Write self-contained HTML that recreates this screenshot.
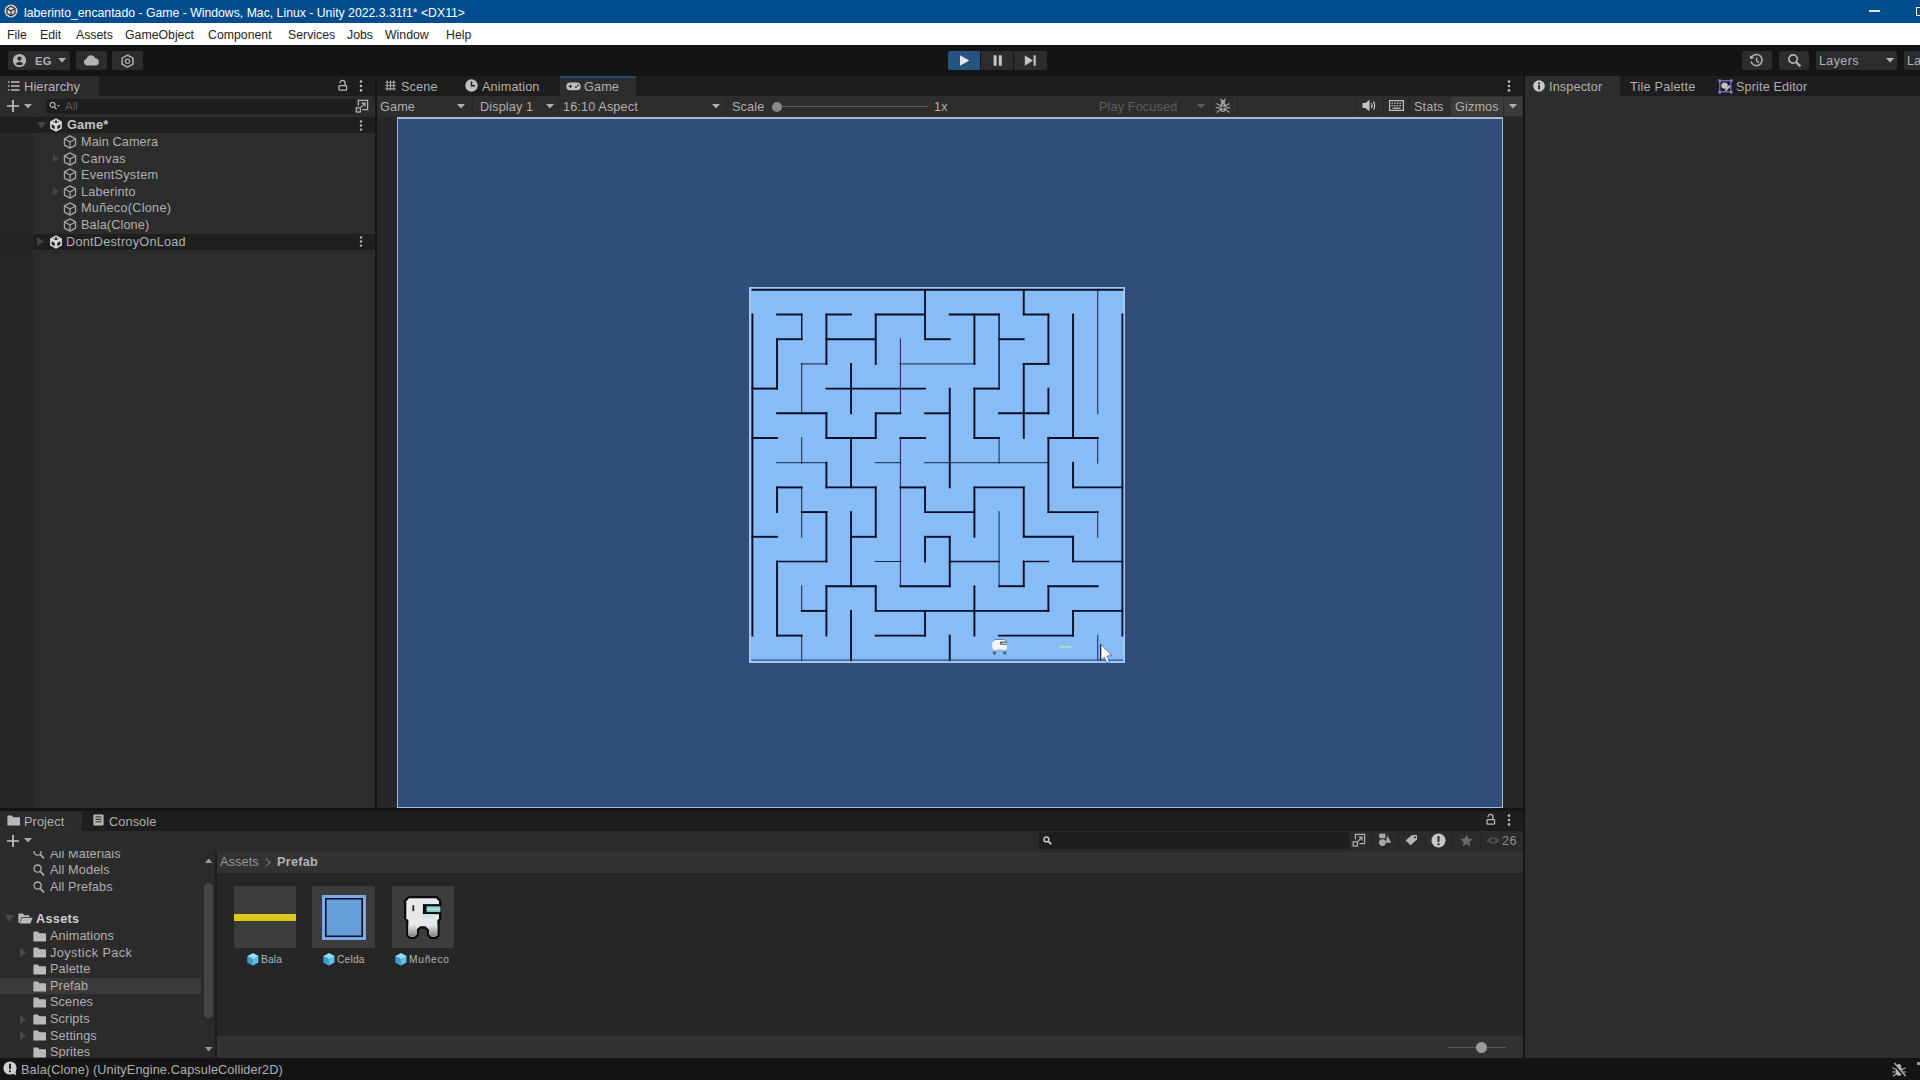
<!DOCTYPE html>
<html><head><meta charset="utf-8"><title>Unity</title>
<style>
*{box-sizing:border-box;margin:0;padding:0}
html,body{width:1920px;height:1080px;overflow:hidden;background:#141414;font-family:"Liberation Sans",sans-serif;font-size:12px;color:#c4c4c4}
.a{position:absolute}
.t{position:absolute;white-space:nowrap;line-height:14px;height:14px}
svg{position:absolute;overflow:visible}
#title{left:0;top:0;width:1920px;height:23.4px;background:#034c8e}
#title .t{color:#fff;font-size:12.25px;top:5.5px;left:24px}
#menu{left:0;top:23px;width:1920px;height:22px;background:#fff}
#menu .t{color:#262626;font-size:12.3px;top:4.5px}
#tb{left:0;top:45px;width:1920px;height:31px;background:#141414}
.btn{position:absolute;background:#2c2c2c;border-radius:2px}
.pan{position:absolute;background:#2b2b2b}
.tabbar{position:absolute;background:#1d1d1d;height:20px}
.tab{position:absolute;height:20px;background:#2b2b2b;top:0}
.dim{color:#7a7a7a}
.hi,.gt,#hiert,.u{letter-spacing:0.12px;font-size:12.7px}
.hi{color:#b0b0b0;margin-top:0.3px}
.gt{color:#b0b0b0;margin-top:0.3px}
</style></head><body>

<!-- ===== title bar ===== -->
<div id="title" class="a">
  <svg style="left:4px;top:4px" width="14" height="14" viewBox="0 0 14 14"><circle cx="7" cy="7" r="6.5" fill="#d9d9d9"/><path d="M7 2.2 L11 4.6 L11 9.4 L7 11.8 L3 9.4 L3 4.6 Z" fill="none" stroke="#222" stroke-width="1.1"/><path d="M7 7 L7 11.8 M7 7 L3 4.6 M7 7 L11 4.6" stroke="#222" stroke-width="1.1"/></svg>
  <div class="t" id="ttl">laberinto_encantado - Game - Windows, Mac, Linux - Unity 2022.3.31f1* &lt;DX11&gt;</div>
  <div class="a" style="left:1869px;top:10.2px;width:11px;height:1.7px;background:#d8e8fa"></div>
  <div class="a" style="left:1916px;top:7px;width:4px;height:9px;border:1px solid #fff;border-right:none"></div>
</div>

<!-- ===== menu bar ===== -->
<div id="menu" class="a">
  <div class="t" style="left:7px">File</div>
  <div class="t" style="left:40px">Edit</div>
  <div class="t" style="left:76px">Assets</div>
  <div class="t" style="left:125px">GameObject</div>
  <div class="t" style="left:208px">Component</div>
  <div class="t" style="left:288px">Services</div>
  <div class="t" style="left:347px">Jobs</div>
  <div class="t" style="left:385px">Window</div>
  <div class="t" style="left:446px">Help</div>
</div>

<!-- ===== main toolbar ===== -->
<div id="tb" class="a">
  <div class="btn" style="left:8px;top:6px;width:62px;height:19px"></div>
  <div class="btn" style="left:76px;top:6px;width:31px;height:19px"></div>
  <div class="btn" style="left:112px;top:6px;width:31px;height:19px"></div>
  <!-- account -->
  <svg style="left:12px;top:8px" width="15" height="15" viewBox="0 0 15 15"><circle cx="7.5" cy="7.5" r="6.6" fill="#b4b4b4"/><circle cx="7.5" cy="5.6" r="2.1" fill="#2c2c2c"/><path d="M3.6 11 Q7.5 6.6 11.4 11 Q7.5 13.6 3.6 11Z" fill="#2c2c2c"/></svg>
  <div class="t" style="left:35px;top:9px;color:#b0b0b0;font-weight:bold;font-size:11.2px;letter-spacing:0.2px">EG</div>
  <svg style="left:58.4px;top:13.4px" width="8.2" height="4.6" viewBox="0 0 9 5"><path d="M0 0H9L4.5 5Z" fill="#b4b4b4"/></svg>
  <!-- cloud -->
  <svg style="left:83px;top:9px" width="17" height="12" viewBox="0 0 17 12"><path d="M4 11.5 A3.4 3.4 0 0 1 3.6 4.8 A4.6 4.6 0 0 1 12.3 4.2 A3.7 3.7 0 0 1 13 11.5 Z" fill="#b4b4b4"/></svg>
  <!-- settings hex -->
  <svg style="left:120px;top:8px" width="15" height="16" viewBox="0 0 15 16"><path d="M7.5 2.2 L12.9 5.2 L12.9 11.2 L7.5 14.2 L2.1 11.2 L2.1 5.2 Z" fill="none" stroke="#b0b0b0" stroke-width="1.5" stroke-linejoin="round"/><circle cx="7.5" cy="8.2" r="2.1" fill="none" stroke="#b0b0b0" stroke-width="1.2"/></svg>

  <!-- play controls -->
  <div class="a" style="left:948px;top:6px;width:32px;height:19px;background:#27537f;border-radius:2px 0 0 2px"></div>
  <div class="a" style="left:981px;top:6px;width:32px;height:19px;background:#2c2c2c"></div>
  <div class="a" style="left:1014px;top:6px;width:33px;height:19px;background:#2c2c2c;border-radius:0 2px 2px 0"></div>
  <svg style="left:959px;top:10px" width="11" height="11" viewBox="0 0 11 11"><path d="M1 0.3 L10.4 5.5 L1 10.7Z" fill="#e6e6e6"/></svg>
  <svg style="left:993px;top:10px" width="10" height="11" viewBox="0 0 10 11"><rect x="0.6" y="0.3" width="3" height="10.4" fill="#c4c4c4"/><rect x="5.8" y="0.3" width="3" height="10.4" fill="#c4c4c4"/></svg>
  <svg style="left:1024px;top:10px" width="13" height="11" viewBox="0 0 13 11"><path d="M0.8 0.3 L9 5.5 L0.8 10.7Z" fill="#c4c4c4"/><rect x="9.6" y="0.3" width="2.2" height="10.4" fill="#c4c4c4"/></svg>

  <!-- right side -->
  <div class="btn" style="left:1742px;top:6px;width:30px;height:19px"></div>
  <div class="btn" style="left:1779px;top:6px;width:30px;height:19px"></div>
  <div class="btn" style="left:1816px;top:6px;width:81px;height:19px"></div>
  <div class="btn" style="left:1904px;top:6px;width:16px;height:19px;border-radius:2px 0 0 2px"></div>
  <svg style="left:1749px;top:8px" width="15" height="15" viewBox="0 0 15 15"><path d="M2.6 4.2 A5.6 5.6 0 1 1 2 8.4" fill="none" stroke="#b4b4b4" stroke-width="1.5"/><path d="M0.6 2.2 L1.4 6.2 L5.2 5Z" fill="#b4b4b4"/><path d="M7.6 4.4 V8 L10 9.6" fill="none" stroke="#b4b4b4" stroke-width="1.4"/></svg>
  <svg style="left:1787px;top:8px" width="15" height="15" viewBox="0 0 15 15"><circle cx="6" cy="6" r="4.2" fill="none" stroke="#b4b4b4" stroke-width="1.7"/><path d="M9.2 9.2 L13.4 13.4" stroke="#b4b4b4" stroke-width="2.2"/></svg>
  <div class="t" style="left:1819px;top:8.7px;color:#b4b4b4;font-size:12.4px;letter-spacing:0.45px">Layers</div>
  <svg style="left:1885.6px;top:13.4px" width="8.2" height="4.6" viewBox="0 0 9 5"><path d="M0 0H9L4.5 5Z" fill="#b4b4b4"/></svg>
  <div class="t" style="left:1907px;top:8.7px;color:#b4b4b4;font-size:12.4px;letter-spacing:0.45px;width:13px;overflow:hidden">La</div>
</div>

<!-- ===== Hierarchy ===== -->
<div class="pan" style="left:0;top:76px;width:375px;height:732px;background:#2c2c2c"></div>
<div class="a" style="left:0;top:116px;width:33px;height:692px;background:#262626"></div>
<div class="tabbar" style="left:0;top:76px;width:375px"></div>
<div class="tab" style="left:0;top:76px;width:99px"></div>
<svg style="left:8px;top:81px" width="12" height="10" viewBox="0 0 12 10"><path d="M0 1H1.6M3 1H11.5M0 5H1.6M3 5H11.5M0 9H1.6M3 9H11.5" stroke="#bdbdbd" stroke-width="1.3"/></svg>
<div class="t" style="left:24px;top:80px;font-size:12.9px;letter-spacing:0.1px;color:#b6b6b6;margin-top:0.3px" id="hiert">Hierarchy</div>
<!-- lock + kebab -->
<svg class="lock" style="left:338px;top:80px" width="10" height="11" viewBox="0 0 10 11"><rect x="1" y="5.6" width="7.6" height="4.6" rx="0.8" fill="none" stroke="#b8b8b8" stroke-width="1.3"/><path d="M2 3.2 V2.9 A2.5 2.5 0 0 1 7 2.9 V5.4" fill="none" stroke="#b8b8b8" stroke-width="1.3"/></svg>
<svg style="left:359px;top:80px" width="4" height="12" viewBox="0 0 4 12"><circle cx="2" cy="1.6" r="1.3" fill="#b8b8b8"/><circle cx="2" cy="6" r="1.3" fill="#b8b8b8"/><circle cx="2" cy="10.4" r="1.3" fill="#b8b8b8"/></svg>
<!-- toolbar -->
<svg style="left:7px;top:100px" width="12" height="12" viewBox="0 0 12 12"><path d="M6 0V12M0 6H12" stroke="#c4c4c4" stroke-width="1.7"/></svg>
<svg style="left:24px;top:104px" width="8" height="5" viewBox="0 0 8 5"><path d="M0 0H8L4 4.6Z" fill="#a8a8a8"/></svg>
<div class="a" style="left:46px;top:99px;width:310px;height:15px;background:#1e1e1e;border-radius:2px"></div>
<svg style="left:49px;top:101px" width="12" height="10" viewBox="0 0 12 10"><circle cx="3.6" cy="3.8" r="2.5" fill="none" stroke="#b0b0b0" stroke-width="1.2"/><path d="M5.4 5.8 L7.6 8.4" stroke="#b0b0b0" stroke-width="1.3"/><path d="M8 4H11L9.5 5.8Z" fill="#b0b0b0"/></svg>
<div class="t" style="left:65px;top:99px;color:#585858;font-size:11.5px">All</div>
<svg style="left:355px;top:99px" width="14" height="14" viewBox="0 0 14 14"><path d="M3.4 6.6 V1.4 H12.6 V10.6 H7.4" fill="none" stroke="#b4b4b4" stroke-width="1.2"/><rect x="1.2" y="8.8" width="4.2" height="4.2" fill="none" stroke="#b4b4b4" stroke-width="1.2"/><path d="M5.6 8.6 L9.6 4.6 M6.6 4.2 H10 V7.6" fill="none" stroke="#b4b4b4" stroke-width="1.2"/></svg>
<!-- scene rows -->
<div class="a" style="left:0;top:117px;width:375px;height:16px;background:#1f1f1f"></div>
<div class="a" style="left:0;top:234px;width:33px;height:16px;background:#232323"></div><div class="a" style="left:33px;top:234px;width:342px;height:16px;background:#1f1f1f"></div>
<svg style="left:37px;top:122px" width="9" height="7" viewBox="0 0 9 7"><path d="M0 0H9L4.5 7Z" fill="#424242"/></svg>
<svg style="left:37px;top:237px" width="7" height="9" viewBox="0 0 7 9"><path d="M0 0V9L7 4.5Z" fill="#424242"/></svg>
<svg style="left:53px;top:154px" width="6" height="9" viewBox="0 0 6 9"><path d="M0 0V9L6 4.5Z" fill="#424242"/></svg>
<svg style="left:53px;top:187px" width="6" height="9" viewBox="0 0 6 9"><path d="M0 0V9L6 4.5Z" fill="#424242"/></svg>
<svg width="0" height="0"><defs>
 <g id="ulogo"><path d="M7 0.2 L12.9 3.6 V10.4 L7 13.8 L1.1 10.4 V3.6Z" fill="#d6d6d6"/><path d="M7 0.9 L8.5 5 H5.5Z M2.7 6.3 L5.7 8 V11.3 L2.7 9.6Z M11.3 6.3 L8.3 8 V11.3 L11.3 9.6Z" fill="#1f1f1f"/><path d="M4.2 3.3 L5.4 4.0 M9.8 3.3 L8.6 4.0" stroke="#1f1f1f" stroke-width="0.8"/></g>
 <g id="cube"><path d="M7 0.9 L12.6 3.9 V10.1 L7 13.1 L1.4 10.1 V3.9Z M1.6 4 L7 7 L12.4 4 M7 7 V13" fill="none" stroke="#a6a6a6" stroke-width="1.25" stroke-linejoin="round"/></g>
</defs></svg>
<svg style="left:49px;top:118px" width="14" height="14" viewBox="0 0 14 14"><use href="#ulogo"/></svg>
<svg style="left:49px;top:235px" width="14" height="14" viewBox="0 0 14 14"><use href="#ulogo"/></svg>
<div class="t" style="left:67px;top:118px;font-weight:bold;font-size:12.8px;color:#c4c4c4;letter-spacing:0.15px;margin-top:0.3px" id="gm">Game*</div>
<svg style="left:63px;top:135px" width="14" height="14" viewBox="0 0 14 14"><use href="#cube"/></svg>
<svg style="left:63px;top:152px" width="14" height="14" viewBox="0 0 14 14"><use href="#cube"/></svg>
<svg style="left:63px;top:168px" width="14" height="14" viewBox="0 0 14 14"><use href="#cube"/></svg>
<svg style="left:63px;top:185px" width="14" height="14" viewBox="0 0 14 14"><use href="#cube"/></svg>
<svg style="left:63px;top:202px" width="14" height="14" viewBox="0 0 14 14"><use href="#cube"/></svg>
<svg style="left:63px;top:218px" width="14" height="14" viewBox="0 0 14 14"><use href="#cube"/></svg>
<div class="t hi" style="left:81px;top:135px;letter-spacing:0.1px">Main Camera</div>
<div class="t hi" style="left:81px;top:152px;letter-spacing:0.32px">Canvas</div>
<div class="t hi" style="left:81px;top:168px;letter-spacing:0.23px">EventSystem</div>
<div class="t hi" style="left:81px;top:185px;letter-spacing:0.21px">Laberinto</div>
<div class="t hi" style="left:81px;top:201px;letter-spacing:0.27px">Muñeco(Clone)</div>
<div class="t hi" style="left:81px;top:218px;letter-spacing:0.12px">Bala(Clone)</div>
<div class="t hi" style="left:66px;top:235px;letter-spacing:0.25px">DontDestroyOnLoad</div>
<svg style="left:359px;top:120px" width="4" height="11" viewBox="0 0 4 11"><circle cx="2" cy="1.4" r="1.2" fill="#b8b8b8"/><circle cx="2" cy="5.5" r="1.2" fill="#b8b8b8"/><circle cx="2" cy="9.6" r="1.2" fill="#b8b8b8"/></svg>
<svg style="left:359px;top:236px" width="4" height="11" viewBox="0 0 4 11"><circle cx="2" cy="1.4" r="1.2" fill="#b8b8b8"/><circle cx="2" cy="5.5" r="1.2" fill="#b8b8b8"/><circle cx="2" cy="9.6" r="1.2" fill="#b8b8b8"/></svg>

<!-- ===== Game panel ===== -->
<div class="pan" style="left:377px;top:76px;width:1146px;height:732px;background:#262626"></div>
<div class="tabbar" style="left:377px;top:76px;width:1146px"></div>
<div class="tab" style="left:560px;top:76px;width:76px;background:#2d2d2d;border-top:2px solid #264b75"></div>
<!-- scene icon -->
<svg style="left:385px;top:80px" width="11" height="11" viewBox="0 0 11 11"><path d="M2.2 0.4V10.6M5.5 0.4V10.6M8.8 0.4V10.6M0.4 2.2H10.6M0.4 5.5H10.6M0.4 8.8H10.6" stroke="#a8a8a8" stroke-width="1.15"/></svg>
<div class="t gt" style="left:401px;top:80px">Scene</div>
<svg style="left:465px;top:79px" width="13" height="13" viewBox="0 0 13 13"><circle cx="6.5" cy="6.5" r="6.2" fill="#bdbdbd"/><path d="M6.5 2.6 V6.8 H10" fill="none" stroke="#1d1d1d" stroke-width="1.5"/></svg>
<div class="t gt" style="left:482px;top:80px">Animation</div>
<svg style="left:566px;top:82px" width="15" height="9" viewBox="0 0 15 9"><rect x="0.3" y="0.6" width="14.4" height="7.6" rx="3.8" fill="#bdbdbd"/><path d="M2.8 4.4H6M4.4 2.8V6" stroke="#2d2d2d" stroke-width="1.1"/><circle cx="10" cy="5.2" r="0.9" fill="#2d2d2d"/><circle cx="12" cy="3.4" r="0.9" fill="#2d2d2d"/></svg>
<div class="t gt" style="left:584px;top:80px">Game</div>
<svg style="left:1507px;top:80px" width="4" height="12" viewBox="0 0 4 12"><circle cx="2" cy="1.6" r="1.3" fill="#b8b8b8"/><circle cx="2" cy="6" r="1.3" fill="#b8b8b8"/><circle cx="2" cy="10.4" r="1.3" fill="#b8b8b8"/></svg>
<!-- game toolbar -->
<div class="a" style="left:377px;top:96px;width:1146px;height:21px;background:#2d2d2d"></div>
<div class="t gt" style="left:380px;top:100px">Game</div>
<svg class="dd" style="left:457px;top:104px" width="8" height="5" viewBox="0 0 8 5"><path d="M0 0H8L4 4.6Z" fill="#b0b0b0"/></svg>
<div class="a" style="left:472px;top:97px;width:1px;height:19px;background:#232323"></div>
<div class="t gt" style="left:480px;top:100px">Display 1</div>
<svg class="dd" style="left:546px;top:104px" width="8" height="5" viewBox="0 0 8 5"><path d="M0 0H8L4 4.6Z" fill="#b0b0b0"/></svg>
<div class="a" style="left:558px;top:97px;width:1px;height:19px;background:#232323"></div>
<div class="t gt" style="left:563px;top:100px">16:10 Aspect</div>
<svg class="dd" style="left:712px;top:104px" width="8" height="5" viewBox="0 0 8 5"><path d="M0 0H8L4 4.6Z" fill="#b0b0b0"/></svg>
<div class="a" style="left:726px;top:97px;width:1px;height:19px;background:#232323"></div>
<div class="t gt" style="left:732px;top:100px">Scale</div>
<div class="a" style="left:778px;top:106px;width:150px;height:1px;background:#5a5a5a"></div>
<div class="a" style="left:772px;top:102px;width:10px;height:10px;border-radius:5px;background:#8a8a8a"></div>
<div class="t gt" style="left:934px;top:100px">1x</div>
<div class="t gt" style="left:1099px;top:100px;color:#5e5e5e">Play Focused</div>
<svg class="dd" style="left:1197px;top:104px" width="8" height="5" viewBox="0 0 8 5"><path d="M0 0H8L4 4.6Z" fill="#5e5e5e"/></svg>
<div class="a" style="left:1211px;top:97px;width:1px;height:19px;background:#232323"></div>
<!-- bug icon -->
<svg style="left:1215px;top:98px" width="16" height="16" viewBox="0 0 16 16"><ellipse cx="8" cy="9.4" rx="3.6" ry="4.6" fill="#a0a0a0"/><circle cx="8" cy="4" r="2.2" fill="#a0a0a0"/><path d="M1.4 5.6 L4.6 7.6 M14.6 5.6 L11.4 7.6 M0.8 9.8 H4.4 M15.2 9.8 H11.6 M1.6 14.4 L4.8 12 M14.4 14.4 L11.2 12 M5.4 0.8 L6.8 2.6 M10.6 0.8 L9.2 2.6" stroke="#a0a0a0" stroke-width="1.2"/><path d="M5.2 9.4H10.8M8 6.2V13" stroke="#2d2d2d" stroke-width="0.9"/></svg>
<div class="a" style="left:1237px;top:97px;width:1px;height:19px;background:#232323"></div>
<div class="a" style="left:1356px;top:97px;width:1px;height:19px;background:#232323"></div>
<!-- audio -->
<svg style="left:1362px;top:99px" width="15" height="13" viewBox="0 0 15 13"><path d="M0.5 4H3.4L7.6 0.8V12.2L3.4 9H0.5Z" fill="#c4c4c4"/><path d="M9.4 4 Q11 6.5 9.4 9 M11.4 2.4 Q14 6.5 11.4 10.6" fill="none" stroke="#c4c4c4" stroke-width="1.2"/></svg>
<div class="a" style="left:1383px;top:97px;width:1px;height:19px;background:#232323"></div>
<!-- keyboard -->
<svg style="left:1389px;top:100px" width="15" height="11" viewBox="0 0 15 11"><rect x="0.6" y="0.6" width="13.8" height="9.8" fill="none" stroke="#c4c4c4" stroke-width="1.2"/><path d="M2.4 3.2H12.6M2.4 5.6H12.6" stroke="#c4c4c4" stroke-width="1.3" stroke-dasharray="1.6 1.1"/><path d="M3.6 8.2H11.4" stroke="#c4c4c4" stroke-width="1.3"/></svg>
<div class="a" style="left:1409px;top:97px;width:1px;height:19px;background:#232323"></div>
<div class="t gt" style="left:1414px;top:100px">Stats</div>
<div class="a" style="left:1451px;top:97px;width:71px;height:19px;background:#3b3b3b"></div>
<div class="a" style="left:1503px;top:97px;width:1px;height:19px;background:#2d2d2d"></div>
<div class="t gt" style="left:1455px;top:100px">Gizmos</div>
<svg class="dd" style="left:1509px;top:104px" width="8" height="5" viewBox="0 0 8 5"><path d="M0 0H8L4 4.6Z" fill="#b0b0b0"/></svg>

<!-- game view -->
<div class="a" style="left:397px;top:117px;width:1106px;height:691.3px;background:#314d79;border:solid #a9bad8;border-width:2px 1.5px 1.5px 1.5px"></div>
<!-- maze -->
<div class="a" style="left:749px;top:287px;width:376.2px;height:376px;background:#87bcf7;box-shadow:inset 0 0 0 2px #a4c6f0"></div>
<svg style="left:0;top:0" width="1920" height="1080" viewBox="0 0 1920 1080"><g stroke="#040c24" stroke-linecap="butt">
<line x1="751.50" y1="289.80" x2="1123.31" y2="289.80" stroke-width="1.9" opacity="1"/>
<line x1="776.17" y1="314.50" x2="802.63" y2="314.50" stroke-width="1.9" opacity="1"/>
<line x1="825.50" y1="314.50" x2="851.97" y2="314.50" stroke-width="1.9" opacity="1"/>
<line x1="874.84" y1="314.50" x2="925.97" y2="314.50" stroke-width="1.9" opacity="1"/>
<line x1="948.84" y1="314.50" x2="999.97" y2="314.50" stroke-width="1.9" opacity="1"/>
<line x1="1022.84" y1="314.50" x2="1049.30" y2="314.50" stroke-width="1.9" opacity="1"/>
<line x1="776.17" y1="339.20" x2="802.63" y2="339.20" stroke-width="1.9" opacity="1"/>
<line x1="825.50" y1="339.20" x2="876.63" y2="339.20" stroke-width="1.9" opacity="1"/>
<line x1="924.17" y1="339.20" x2="950.64" y2="339.20" stroke-width="1.9" opacity="1"/>
<line x1="998.17" y1="339.20" x2="1024.64" y2="339.20" stroke-width="1.9" opacity="1"/>
<line x1="800.83" y1="363.90" x2="827.30" y2="363.90" stroke-width="1.0" opacity="0.85"/>
<line x1="899.50" y1="363.90" x2="975.30" y2="363.90" stroke-width="1.0" opacity="0.85"/>
<line x1="1022.84" y1="363.90" x2="1049.30" y2="363.90" stroke-width="1.9" opacity="1"/>
<line x1="751.50" y1="388.60" x2="777.97" y2="388.60" stroke-width="1.9" opacity="1"/>
<line x1="825.50" y1="388.60" x2="925.97" y2="388.60" stroke-width="1.9" opacity="1"/>
<line x1="973.50" y1="388.60" x2="999.97" y2="388.60" stroke-width="1.9" opacity="1"/>
<line x1="776.17" y1="413.30" x2="827.30" y2="413.30" stroke-width="1.9" opacity="1"/>
<line x1="874.84" y1="413.30" x2="901.30" y2="413.30" stroke-width="1.9" opacity="1"/>
<line x1="924.17" y1="413.30" x2="950.64" y2="413.30" stroke-width="1.9" opacity="1"/>
<line x1="998.17" y1="413.30" x2="1049.30" y2="413.30" stroke-width="1.9" opacity="1"/>
<line x1="751.50" y1="438.00" x2="777.97" y2="438.00" stroke-width="1.9" opacity="1"/>
<line x1="825.50" y1="438.00" x2="876.63" y2="438.00" stroke-width="1.9" opacity="1"/>
<line x1="899.50" y1="438.00" x2="925.97" y2="438.00" stroke-width="1.9" opacity="1"/>
<line x1="973.50" y1="438.00" x2="999.97" y2="438.00" stroke-width="1.9" opacity="1"/>
<line x1="1047.50" y1="438.00" x2="1098.64" y2="438.00" stroke-width="1.9" opacity="1"/>
<line x1="776.17" y1="462.70" x2="827.30" y2="462.70" stroke-width="1.0" opacity="0.85"/>
<line x1="874.84" y1="462.70" x2="901.30" y2="462.70" stroke-width="1.0" opacity="0.85"/>
<line x1="924.17" y1="462.70" x2="1049.30" y2="462.70" stroke-width="1.0" opacity="0.85"/>
<line x1="776.17" y1="487.40" x2="802.63" y2="487.40" stroke-width="1.9" opacity="1"/>
<line x1="825.50" y1="487.40" x2="876.63" y2="487.40" stroke-width="1.9" opacity="1"/>
<line x1="899.50" y1="487.40" x2="925.97" y2="487.40" stroke-width="1.9" opacity="1"/>
<line x1="973.50" y1="487.40" x2="1024.64" y2="487.40" stroke-width="1.9" opacity="1"/>
<line x1="1072.17" y1="487.40" x2="1123.31" y2="487.40" stroke-width="1.9" opacity="1"/>
<line x1="800.83" y1="512.10" x2="827.30" y2="512.10" stroke-width="1.9" opacity="1"/>
<line x1="924.17" y1="512.10" x2="975.30" y2="512.10" stroke-width="1.9" opacity="1"/>
<line x1="1047.50" y1="512.10" x2="1098.64" y2="512.10" stroke-width="1.9" opacity="1"/>
<line x1="751.50" y1="536.80" x2="777.97" y2="536.80" stroke-width="1.9" opacity="1"/>
<line x1="850.17" y1="536.80" x2="876.63" y2="536.80" stroke-width="1.9" opacity="1"/>
<line x1="924.17" y1="536.80" x2="950.64" y2="536.80" stroke-width="1.9" opacity="1"/>
<line x1="1022.84" y1="536.80" x2="1073.97" y2="536.80" stroke-width="1.9" opacity="1"/>
<line x1="776.17" y1="561.50" x2="827.30" y2="561.50" stroke-width="1.4" opacity="1"/>
<line x1="874.84" y1="561.50" x2="901.30" y2="561.50" stroke-width="1.0" opacity="0.85"/>
<line x1="948.84" y1="561.50" x2="999.97" y2="561.50" stroke-width="1.4" opacity="1"/>
<line x1="1022.84" y1="561.50" x2="1049.30" y2="561.50" stroke-width="1.4" opacity="1"/>
<line x1="1072.17" y1="561.50" x2="1123.31" y2="561.50" stroke-width="1.4" opacity="1"/>
<line x1="825.50" y1="586.20" x2="876.63" y2="586.20" stroke-width="1.9" opacity="1"/>
<line x1="899.50" y1="586.20" x2="950.64" y2="586.20" stroke-width="1.9" opacity="1"/>
<line x1="998.17" y1="586.20" x2="1024.64" y2="586.20" stroke-width="1.9" opacity="1"/>
<line x1="1047.50" y1="586.20" x2="1098.64" y2="586.20" stroke-width="1.9" opacity="1"/>
<line x1="800.83" y1="610.90" x2="827.30" y2="610.90" stroke-width="1.9" opacity="1"/>
<line x1="874.84" y1="610.90" x2="1049.30" y2="610.90" stroke-width="1.9" opacity="1"/>
<line x1="1072.17" y1="610.90" x2="1123.31" y2="610.90" stroke-width="1.9" opacity="1"/>
<line x1="776.17" y1="635.60" x2="802.63" y2="635.60" stroke-width="1.9" opacity="1"/>
<line x1="874.84" y1="635.60" x2="925.97" y2="635.60" stroke-width="1.9" opacity="1"/>
<line x1="998.17" y1="635.60" x2="1073.97" y2="635.60" stroke-width="1.9" opacity="1"/>
<line x1="752.40" y1="313.60" x2="752.40" y2="636.50" stroke-width="1.9" opacity="1"/>
<line x1="777.07" y1="338.30" x2="777.07" y2="389.50" stroke-width="1.9" opacity="1"/>
<line x1="777.07" y1="486.50" x2="777.07" y2="513.00" stroke-width="1.9" opacity="1"/>
<line x1="777.07" y1="560.60" x2="777.07" y2="636.50" stroke-width="1.9" opacity="1"/>
<line x1="801.73" y1="313.60" x2="801.73" y2="340.10" stroke-width="1.4" opacity="1"/>
<line x1="801.73" y1="363.00" x2="801.73" y2="414.20" stroke-width="1.0" opacity="0.85"/>
<line x1="801.73" y1="437.10" x2="801.73" y2="463.60" stroke-width="1.0" opacity="0.85"/>
<line x1="801.73" y1="486.50" x2="801.73" y2="537.70" stroke-width="1.0" opacity="0.85"/>
<line x1="801.73" y1="585.30" x2="801.73" y2="611.80" stroke-width="1.0" opacity="0.85"/>
<line x1="801.73" y1="634.70" x2="801.73" y2="661.20" stroke-width="1.0" opacity="0.85"/>
<line x1="826.40" y1="313.60" x2="826.40" y2="364.80" stroke-width="1.9" opacity="1"/>
<line x1="826.40" y1="412.40" x2="826.40" y2="438.90" stroke-width="1.9" opacity="1"/>
<line x1="826.40" y1="461.80" x2="826.40" y2="488.30" stroke-width="1.9" opacity="1"/>
<line x1="826.40" y1="511.20" x2="826.40" y2="562.40" stroke-width="1.9" opacity="1"/>
<line x1="826.40" y1="585.30" x2="826.40" y2="636.50" stroke-width="1.9" opacity="1"/>
<line x1="851.07" y1="363.00" x2="851.07" y2="414.20" stroke-width="1.9" opacity="1"/>
<line x1="851.07" y1="437.10" x2="851.07" y2="488.30" stroke-width="1.9" opacity="1"/>
<line x1="851.07" y1="511.20" x2="851.07" y2="587.10" stroke-width="1.9" opacity="1"/>
<line x1="851.07" y1="610.00" x2="851.07" y2="661.20" stroke-width="1.9" opacity="1"/>
<line x1="875.74" y1="313.60" x2="875.74" y2="364.80" stroke-width="1.9" opacity="1"/>
<line x1="875.74" y1="412.40" x2="875.74" y2="438.90" stroke-width="1.9" opacity="1"/>
<line x1="875.74" y1="486.50" x2="875.74" y2="537.70" stroke-width="1.9" opacity="1"/>
<line x1="875.74" y1="585.30" x2="875.74" y2="611.80" stroke-width="1.9" opacity="1"/>
<line x1="900.40" y1="338.30" x2="900.40" y2="414.20" stroke-width="1.0" opacity="0.85"/>
<line x1="900.40" y1="437.10" x2="900.40" y2="587.10" stroke-width="1.0" opacity="0.85"/>
<line x1="925.07" y1="288.90" x2="925.07" y2="340.10" stroke-width="1.9" opacity="1"/>
<line x1="925.07" y1="486.50" x2="925.07" y2="513.00" stroke-width="1.9" opacity="1"/>
<line x1="925.07" y1="535.90" x2="925.07" y2="562.40" stroke-width="1.9" opacity="1"/>
<line x1="925.07" y1="610.00" x2="925.07" y2="636.50" stroke-width="1.9" opacity="1"/>
<line x1="949.74" y1="387.70" x2="949.74" y2="488.30" stroke-width="1.9" opacity="1"/>
<line x1="949.74" y1="535.90" x2="949.74" y2="587.10" stroke-width="1.9" opacity="1"/>
<line x1="949.74" y1="634.70" x2="949.74" y2="661.20" stroke-width="1.9" opacity="1"/>
<line x1="974.40" y1="313.60" x2="974.40" y2="364.80" stroke-width="1.9" opacity="1"/>
<line x1="974.40" y1="387.70" x2="974.40" y2="438.90" stroke-width="1.9" opacity="1"/>
<line x1="974.40" y1="486.50" x2="974.40" y2="537.70" stroke-width="1.9" opacity="1"/>
<line x1="974.40" y1="585.30" x2="974.40" y2="636.50" stroke-width="1.9" opacity="1"/>
<line x1="999.07" y1="313.60" x2="999.07" y2="389.50" stroke-width="1.4" opacity="1"/>
<line x1="999.07" y1="437.10" x2="999.07" y2="463.60" stroke-width="1.0" opacity="0.85"/>
<line x1="999.07" y1="511.20" x2="999.07" y2="587.10" stroke-width="1.0" opacity="0.85"/>
<line x1="1023.74" y1="288.90" x2="1023.74" y2="315.40" stroke-width="1.9" opacity="1"/>
<line x1="1023.74" y1="363.00" x2="1023.74" y2="438.90" stroke-width="1.9" opacity="1"/>
<line x1="1023.74" y1="486.50" x2="1023.74" y2="537.70" stroke-width="1.9" opacity="1"/>
<line x1="1023.74" y1="560.60" x2="1023.74" y2="587.10" stroke-width="1.9" opacity="1"/>
<line x1="1048.40" y1="313.60" x2="1048.40" y2="364.80" stroke-width="1.9" opacity="1"/>
<line x1="1048.40" y1="387.70" x2="1048.40" y2="414.20" stroke-width="1.9" opacity="1"/>
<line x1="1048.40" y1="437.10" x2="1048.40" y2="513.00" stroke-width="1.9" opacity="1"/>
<line x1="1048.40" y1="585.30" x2="1048.40" y2="611.80" stroke-width="1.9" opacity="1"/>
<line x1="1073.07" y1="313.60" x2="1073.07" y2="438.90" stroke-width="1.9" opacity="1"/>
<line x1="1073.07" y1="461.80" x2="1073.07" y2="488.30" stroke-width="1.9" opacity="1"/>
<line x1="1073.07" y1="535.90" x2="1073.07" y2="562.40" stroke-width="1.9" opacity="1"/>
<line x1="1073.07" y1="610.00" x2="1073.07" y2="636.50" stroke-width="1.9" opacity="1"/>
<line x1="1097.74" y1="288.90" x2="1097.74" y2="414.20" stroke-width="1.0" opacity="0.85"/>
<line x1="1097.74" y1="437.10" x2="1097.74" y2="463.60" stroke-width="1.0" opacity="0.85"/>
<line x1="1097.74" y1="511.20" x2="1097.74" y2="537.70" stroke-width="1.0" opacity="0.85"/>
<line x1="1097.74" y1="634.70" x2="1097.74" y2="661.20" stroke-width="1.0" opacity="0.85"/>
<line x1="1122.40" y1="313.60" x2="1122.40" y2="636.50" stroke-width="1.9" opacity="1"/>
<line x1="751.5" y1="660.2" x2="1123.2" y2="660.2" stroke="#2d4f86" stroke-width="1.3"/>
</g>
<!-- character -->
<g transform="translate(992,639)">
 <defs><linearGradient id="lgl" x1="0" y1="0" x2="0" y2="1"><stop offset="0" stop-color="#c9d4e2"/><stop offset="0.55" stop-color="#55739a"/><stop offset="1" stop-color="#3f5d86"/></linearGradient></defs>
 <path d="M1.2 10 L4.8 10.4 L4.2 14.2 L2.6 15.9 L0.7 14.6 Z M10.2 10.4 L13.9 10 L14.6 14.4 L12.8 15.9 L11 14.2Z" fill="url(#lgl)"/>
 <path d="M0.3 4.2 Q0.3 0.4 4 0.4 H11.4 Q15 0.4 15 4.2 V8.4 Q15 10.4 13.6 11 L11.6 11.6 L10.4 10.6 H5.2 L3.8 11.6 L1.6 11 Q0.3 10.4 0.3 8.4Z" fill="#f3f5f7"/>
 <path d="M0.9 2.6 Q1.8 0.4 4 0.4 H11.4 Q13.6 0.4 14.5 2.6" fill="none" stroke="#4b6584" stroke-width="0.8"/>
 <rect x="7.9" y="2.6" width="7.3" height="3.2" rx="1.2" fill="#3f5f5c"/>
 <rect x="9.3" y="3.7" width="5.9" height="1" fill="#eef8f4"/>
</g>
<!-- bullet -->
<rect x="1059.5" y="646.2" width="12" height="1.3" rx="0.6" fill="#cfe6a4"/>
<!-- cursor -->
<path d="M1100.9 644.4 V660.2 L1104.4 657 L1106.9 662.8 L1109.4 661.7 L1106.9 655.9 L1111.8 655.6 Z" fill="#fff" stroke="#27406a" stroke-width="0.6" stroke-linejoin="round"/><path d="M1100.6 644 V660.4" stroke="#0a1020" stroke-width="0.9"/>
</svg>

<!-- ===== Inspector ===== -->
<div class="pan" style="left:1525px;top:76px;width:395px;height:982px;background:#2d2d2d"></div>
<div class="tabbar" style="left:1525px;top:76px;width:395px"></div>
<div class="tab" style="left:1525px;top:76px;width:95px;background:#2d2d2d"></div>
<svg style="left:1533px;top:80px" width="12" height="12" viewBox="0 0 12 12"><circle cx="6" cy="6" r="5.8" fill="#c8c8c8"/><rect x="5.1" y="5" width="1.9" height="4.4" fill="#2b2b2b"/><rect x="5.1" y="2.4" width="1.9" height="1.8" fill="#2b2b2b"/></svg>
<div class="t gt" style="left:1549px;top:80px">Inspector</div>
<div class="t gt" style="left:1630px;top:80px;letter-spacing:0.22px">Tile Palette</div>
<svg style="left:1718px;top:79px" width="15" height="15" viewBox="0 0 15 15"><rect x="1.8" y="1.8" width="11" height="11" fill="none" stroke="#8a78d8" stroke-width="1.2"/><rect x="0.4" y="0.4" width="2.6" height="2.6" fill="#8a78d8"/><rect x="12" y="0.4" width="2.6" height="2.6" fill="#8a78d8"/><rect x="0.4" y="12" width="2.6" height="2.6" fill="#8a78d8"/><rect x="12" y="12" width="2.6" height="2.6" fill="#8a78d8"/><circle cx="6.6" cy="6.6" r="3.2" fill="#c4c4c4"/><path d="M7.4 11.6 L12 6.6" stroke="#c4c4c4" stroke-width="2"/></svg>
<div class="t gt" style="left:1736px;top:80px">Sprite Editor</div>

<!-- ===== Project ===== -->
<div class="pan" style="left:0;top:811px;width:1523px;height:247px;background:#2b2b2b"></div>
<div class="tabbar" style="left:0;top:811px;width:1523px"></div>
<div class="tab" style="left:0;top:811px;width:82px"></div>
<svg width="0" height="0"><defs>
 <g id="fold"><path d="M0.4 1.2 Q0.4 0.6 1 0.6 H5 L6.2 2.2 H12.4 Q13 2.2 13 2.8 V10 Q13 10.6 12.4 10.6 H1 Q0.4 10.6 0.4 10Z" fill="#b9b9b9"/></g>
 <g id="mag"><circle cx="4.6" cy="4.6" r="3.6" fill="none" stroke="#b0b0b0" stroke-width="1.3"/><path d="M7.2 7.4 L11 11.4" stroke="#b0b0b0" stroke-width="1.6"/></g>
 <g id="pcube"><path d="M6 0.3 L11.4 3 V9.4 L6 12.4 L0.6 9.4 V3Z" fill="#5cc0e8"/><path d="M6 0.3 L11.4 3 L6 5.9 L0.6 3Z" fill="#9adcf6"/><path d="M6 5.9 V12.4 L0.6 9.4 V3Z" fill="#3e9ccc"/></g>
</defs></svg>
<svg style="left:7px;top:815px" width="14" height="11" viewBox="0 0 14 11"><use href="#fold"/></svg>
<div class="t gt" style="left:24px;top:815px">Project</div>
<svg style="left:93px;top:814px" width="11" height="12" viewBox="0 0 11 12"><rect x="0.4" y="0.4" width="10.2" height="11.2" rx="1" fill="#b9b9b9"/><path d="M2.4 3H8.6M2.4 5.4H8.6M2.4 7.8H8.6" stroke="#1d1d1d" stroke-width="1"/></svg>
<div class="t gt" style="left:109px;top:815px">Console</div>
<svg style="left:1486px;top:814px" width="10" height="11" viewBox="0 0 10 11"><rect x="1" y="5.6" width="7.6" height="4.6" rx="0.8" fill="none" stroke="#b8b8b8" stroke-width="1.3"/><path d="M2 3.2 V2.9 A2.5 2.5 0 0 1 7 2.9 V5.4" fill="none" stroke="#b8b8b8" stroke-width="1.3"/></svg>
<svg style="left:1507px;top:814px" width="4" height="12" viewBox="0 0 4 12"><circle cx="2" cy="1.6" r="1.3" fill="#b8b8b8"/><circle cx="2" cy="6" r="1.3" fill="#b8b8b8"/><circle cx="2" cy="10.4" r="1.3" fill="#b8b8b8"/></svg>
<!-- toolbar row -->
<svg style="left:7px;top:834.6px" width="12" height="12" viewBox="0 0 12 12"><path d="M6 0V12M0 6H12" stroke="#c4c4c4" stroke-width="1.7"/></svg>
<svg style="left:24px;top:838px" width="8" height="5" viewBox="0 0 8 5"><path d="M0 0H8L4 4.6Z" fill="#a8a8a8"/></svg>
<div class="a" style="left:1039px;top:832px;width:311px;height:17px;background:#1e1e1e;border-radius:3px"></div>
<svg style="left:1043px;top:836px" width="9" height="9" viewBox="0 0 12 12"><circle cx="4.6" cy="4.6" r="3.2" fill="none" stroke="#c4c4c4" stroke-width="2"/><path d="M7 7 L11 11" stroke="#c4c4c4" stroke-width="2.4"/></svg>
<svg style="left:1352px;top:833px" width="14" height="14" viewBox="0 0 14 14"><path d="M3.4 6.6 V1.4 H12.6 V10.6 H7.4" fill="none" stroke="#b4b4b4" stroke-width="1.2"/><rect x="1.2" y="8.8" width="4.2" height="4.2" fill="none" stroke="#b4b4b4" stroke-width="1.2"/><path d="M5.6 8.6 L9.6 4.6 M6.6 4.2 H10 V7.6" fill="none" stroke="#b4b4b4" stroke-width="1.2"/></svg>
<div class="a" style="left:1371px;top:832px;width:1px;height:17px;background:#242424"></div>
<svg style="left:1378px;top:833px" width="14" height="14" viewBox="0 0 14 14"><circle cx="4.4" cy="9.6" r="3.4" fill="#a8a8a8"/><rect x="1.2" y="0.6" width="6.2" height="4.6" fill="#a8a8a8"/><path d="M9.4 2.6 L13.2 9.8 H7.6Z" fill="#a8a8a8"/></svg>
<div class="a" style="left:1398px;top:832px;width:1px;height:17px;background:#242424"></div>
<svg style="left:1405px;top:834px" width="13" height="12" viewBox="0 0 13 12"><path d="M0.6 6.4 L7 1 H12 V5.6 L5.6 11.2Z" fill="#b4b4b4"/><circle cx="10" cy="3.2" r="1" fill="#2b2b2b"/></svg>
<div class="a" style="left:1425px;top:832px;width:1px;height:17px;background:#242424"></div>
<svg style="left:1431px;top:833px" width="15" height="15" viewBox="0 0 15 15"><circle cx="7.5" cy="7.5" r="7" fill="#c8c8c8"/><rect x="6.5" y="3" width="2" height="6" fill="#2b2b2b"/><rect x="6.5" y="10.2" width="2" height="2" fill="#2b2b2b"/></svg>
<div class="a" style="left:1452px;top:832px;width:1px;height:17px;background:#242424"></div>
<svg style="left:1460px;top:834px" width="13" height="13" viewBox="0 0 13 13"><path d="M6.5 0.4 L8.3 4.6 L12.8 5 L9.4 8 L10.4 12.4 L6.5 10 L2.6 12.4 L3.6 8 L0.2 5 L4.7 4.6Z" fill="#6a6a6a"/></svg>
<div class="a" style="left:1480px;top:832px;width:1px;height:17px;background:#242424"></div>
<svg style="left:1486px;top:836px" width="14" height="9" viewBox="0 0 14 9"><path d="M0.4 4.5 Q7 -2.4 13.6 4.5 Q7 11.4 0.4 4.5Z" fill="#4e4e4e"/><circle cx="7" cy="4.5" r="2" fill="#2b2b2b"/></svg>
<div class="t gt" style="left:1502px;top:834px;color:#8e8e8e;letter-spacing:0.5px">26</div>

<!-- left tree -->
<div class="a" style="left:0;top:852px;width:215px;height:206px;background:#2b2b2b"></div>
<div class="a" style="left:0;top:978px;width:201px;height:16px;background:#3a3a3a"></div>
<div class="a" style="left:201px;top:852px;width:15px;height:206px;background:#2a2a2a"></div>
<div class="a" style="left:204px;top:883px;width:9px;height:135px;border-radius:5px;background:#454545"></div>
<svg style="left:205px;top:857.6px" width="7.4" height="5" viewBox="0 0 9 6"><path d="M0 6H9L4.5 0.6Z" fill="#9a9a9a"/></svg>
<svg style="left:205px;top:1047px" width="7.4" height="5" viewBox="0 0 9 6"><path d="M0 0H9L4.5 5.4Z" fill="#9a9a9a"/></svg>
<div class="a" style="left:215px;top:852px;width:2px;height:206px;background:#1c1c1c"></div>
<div class="a" style="left:0;top:851px;width:200px;height:9px;overflow:hidden"><div class="t gt" style="left:50px;top:-4px">All Materials</div><svg style="left:33px;top:-3.6px" width="12" height="12" viewBox="0 0 12 12"><use href="#mag"/></svg></div>
<svg style="left:33px;top:864px" width="12" height="12" viewBox="0 0 12 12"><use href="#mag"/></svg>
<svg style="left:33px;top:881px" width="12" height="12" viewBox="0 0 12 12"><use href="#mag"/></svg>
<div class="t gt" style="left:50px;top:863px">All Models</div>
<div class="t gt" style="left:50px;top:880px">All Prefabs</div>
<svg style="left:5px;top:915px" width="9" height="7" viewBox="0 0 9 7"><path d="M0 0H9L4.5 7Z" fill="#4a4a4a"/></svg>
<svg style="left:18px;top:913px" width="15" height="11" viewBox="0 0 15 11"><path d="M0.4 1.2 Q0.4 0.6 1 0.6 H5 L6.2 2.2 H11.4 V4 H3.6 L1.4 10 H0.4Z" fill="#b9b9b9"/><path d="M4 4.8 H14.6 L12.4 10.6 H1.8Z" fill="#b9b9b9"/></svg>
<div class="t gt" style="left:36px;top:912px;font-weight:bold;color:#cfcfcf;letter-spacing:0.3px">Assets</div>
<svg style="left:33px;top:931px" width="14" height="11" viewBox="0 0 14 11"><use href="#fold"/></svg>
<svg style="left:33px;top:947px" width="14" height="11" viewBox="0 0 14 11"><use href="#fold"/></svg>
<svg style="left:33px;top:964px" width="14" height="11" viewBox="0 0 14 11"><use href="#fold"/></svg>
<svg style="left:33px;top:981px" width="14" height="11" viewBox="0 0 14 11"><use href="#fold"/></svg>
<svg style="left:33px;top:997px" width="14" height="11" viewBox="0 0 14 11"><use href="#fold"/></svg>
<svg style="left:33px;top:1014px" width="14" height="11" viewBox="0 0 14 11"><use href="#fold"/></svg>
<svg style="left:33px;top:1030px" width="14" height="11" viewBox="0 0 14 11"><use href="#fold"/></svg>
<svg style="left:33px;top:1047px" width="14" height="11" viewBox="0 0 14 11"><use href="#fold"/></svg>
<svg style="left:20px;top:948px" width="6" height="9" viewBox="0 0 6 9"><path d="M0 0V9L6 4.5Z" fill="#4a4a4a"/></svg>
<svg style="left:20px;top:1015px" width="6" height="9" viewBox="0 0 6 9"><path d="M0 0V9L6 4.5Z" fill="#4a4a4a"/></svg>
<svg style="left:20px;top:1031px" width="6" height="9" viewBox="0 0 6 9"><path d="M0 0V9L6 4.5Z" fill="#4a4a4a"/></svg>
<div class="t gt" style="left:50px;top:929px">Animations</div>
<div class="t gt" style="left:50px;top:946px;letter-spacing:0.42px">Joystick Pack</div>
<div class="t gt" style="left:50px;top:962px">Palette</div>
<div class="t gt" style="left:50px;top:979px">Prefab</div>
<div class="t gt" style="left:50px;top:995px">Scenes</div>
<div class="t gt" style="left:50px;top:1012px">Scripts</div>
<div class="t gt" style="left:50px;top:1029px">Settings</div>
<div class="t gt" style="left:50px;top:1045px;height:13px;overflow:hidden">Sprites</div>

<!-- right content -->
<div class="a" style="left:217px;top:852px;width:1306px;height:21px;background:#323232"></div>
<div class="a" style="left:217px;top:873px;width:1306px;height:163px;background:#262626"></div>
<div class="a" style="left:217px;top:1036px;width:1306px;height:22px;background:#323232"></div>
<div class="t gt" style="left:220px;top:855px;color:#9a9a9a">Assets</div>
<svg style="left:265px;top:858px" width="6" height="9" viewBox="0 0 6 9"><path d="M0.6 0.6 L5 4.5 L0.6 8.4" fill="none" stroke="#6e6e6e" stroke-width="1.3"/></svg>
<div class="t gt" style="left:277px;top:855px;font-weight:bold;color:#b4b4b4;letter-spacing:0.25px">Prefab</div>
<!-- thumbs -->
<div class="a" style="left:234px;top:886px;width:62px;height:62px;background:#3c3c3c"></div>
<div class="a" style="left:234px;top:913.8px;width:62px;height:7.3px;background:#dcc71a"></div>
<div class="a" style="left:312px;top:886px;width:63px;height:62px;background:#3c3c3c"></div>
<div class="a" style="left:321.6px;top:894.8px;width:44.6px;height:45px;background:#699fd9;border:3.6px solid #7aa9e5;box-shadow:inset 0 0 0 1.6px #060f28"></div>
<div class="a" style="left:392px;top:886px;width:62px;height:62px;background:#3c3c3c"></div>
<svg style="left:404.2px;top:895.8px" width="37.3" height="43.1" viewBox="0 0 16 18.5"><defs><linearGradient id="lg" x1="0" y1="0" x2="0" y2="1"><stop offset="0" stop-color="#e2e4e6"/><stop offset="1" stop-color="#7e8084"/></linearGradient></defs><path d="M2 0.5 H14 L15.5 2 V10 L14.8 10.6 V17 L13.6 18 H11.6 L10.3 16.6 V14.6 L9 13.5 H7 L5.9 14.6 V16.6 L4.6 18 H2.6 L1.4 17 V10.6 L0.5 10 V2 Z" fill="#e6e8ea" stroke="#0a0a0a" stroke-width="0.95" stroke-linejoin="round"/><path d="M1.9 12.6 H5.5 V16.4 L4.4 17.5 H2.8 L1.9 16.8Z M10.7 12.6 H14.3 V16.8 L13.4 17.5 H11.8 L10.7 16.4Z" fill="url(#lg)"/><rect x="3.6" y="4" width="0.75" height="2.5" fill="#222"/><rect x="8.1" y="3.5" width="7.5" height="4.3" fill="#0c0c0c"/><rect x="9.7" y="4.4" width="5.9" height="2.5" fill="#86cbc6"/><rect x="9.7" y="5.2" width="5.9" height="0.8" fill="#b4e2de"/><rect x="8.2" y="7.8" width="4.6" height="1.7" fill="#c4e6ea"/></svg>
<svg style="left:247px;top:953px" width="12" height="13" viewBox="0 0 12 13"><use href="#pcube"/></svg>
<svg style="left:323px;top:953px" width="12" height="13" viewBox="0 0 12 13"><use href="#pcube"/></svg>
<svg style="left:395px;top:953px" width="12" height="13" viewBox="0 0 12 13"><use href="#pcube"/></svg>
<div class="t" style="left:261px;top:953px;font-size:10.2px;color:#b4b4b4;letter-spacing:0.2px">Bala</div>
<div class="t" style="left:337px;top:953px;font-size:10.2px;color:#b4b4b4;letter-spacing:0.2px">Celda</div>
<div class="t" style="left:409px;top:953px;font-size:10.2px;color:#b4b4b4;letter-spacing:0.75px">Muñeco</div>
<!-- zoom slider -->
<div class="a" style="left:1448px;top:1047px;width:58px;height:1px;background:#555"></div>
<div class="a" style="left:1476px;top:1042px;width:11px;height:11px;border-radius:6px;background:#9a9a9a"></div>

<!-- ===== Status bar ===== -->
<div class="a" style="left:0;top:1058px;width:1920px;height:22px;background:#141414"></div>
<svg style="left:3px;top:1061.4px" width="14" height="15" viewBox="0 0 14 15"><circle cx="7" cy="7" r="6.6" fill="#cfcfcf"/><path d="M9 12 L13 14.6 L12.4 9.5Z" fill="#cfcfcf"/><rect x="6.1" y="2.8" width="1.8" height="5.4" fill="#141414"/><rect x="6.1" y="9.4" width="1.8" height="1.8" fill="#141414"/></svg>
<div class="t gt" style="left:21px;top:1062.8px" id="stt">Bala(Clone) (UnityEngine.CapsuleCollider2D)</div>
<svg style="left:1891px;top:1062px" width="16" height="16" viewBox="0 0 16 16"><ellipse cx="8" cy="9.4" rx="3.4" ry="4.4" fill="#b4b4b4"/><circle cx="8" cy="4.2" r="2.1" fill="#b4b4b4"/><path d="M1.6 5.8 L4.8 7.6 M14.4 5.8 L11.2 7.6 M1 10 H4.6 M15 10 H11.4 M2 14.2 L5 12 M14 14.2 L11 12" stroke="#b4b4b4" stroke-width="1.2"/><path d="M2.6 1.6 L13.8 14.6" stroke="#141414" stroke-width="2.4"/><path d="M3.4 1 L14.6 14" stroke="#b4b4b4" stroke-width="1.2"/></svg>
<div class="a" style="left:1917px;top:1062px;width:3px;height:3px;background:#9a9a9a"></div>


</body></html>
